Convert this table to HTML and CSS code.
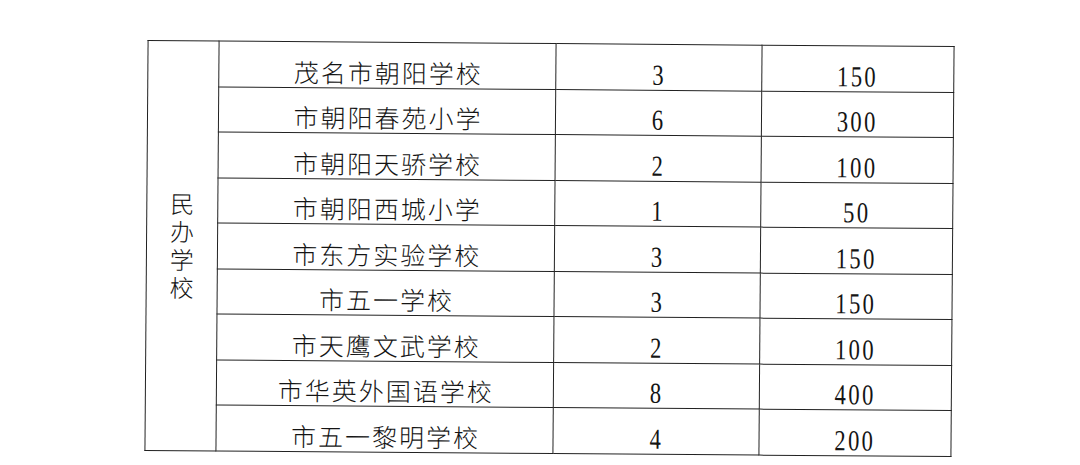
FILE: index.html
```html
<!DOCTYPE html>
<html lang="zh-CN">
<head>
<meta charset="utf-8">
<title>民办学校</title>
<link rel="stylesheet" href="styles.css">
</head>
<body>
<div class="page">
  <table class="sheet">
    <colgroup>
      <col class="c1"><col class="c2"><col class="c3"><col class="c4">
    </colgroup>
    <tbody>
      <tr>
        <td class="cat" rowspan="9"><span class="vert">民办学校</span></td>
        <td class="name">茂名市朝阳学校</td><td class="num"><span class="n">3</span></td><td class="num"><span class="n">150</span></td>
      </tr>
      <tr><td class="name">市朝阳春苑小学</td><td class="num"><span class="n">6</span></td><td class="num"><span class="n">300</span></td></tr>
      <tr><td class="name">市朝阳天骄学校</td><td class="num"><span class="n">2</span></td><td class="num"><span class="n">100</span></td></tr>
      <tr><td class="name">市朝阳西城小学</td><td class="num"><span class="n">1</span></td><td class="num"><span class="n">50</span></td></tr>
      <tr><td class="name">市东方实验学校</td><td class="num"><span class="n">3</span></td><td class="num"><span class="n">150</span></td></tr>
      <tr><td class="name">市五一学校</td><td class="num"><span class="n">3</span></td><td class="num"><span class="n">150</span></td></tr>
      <tr><td class="name">市天鹰文武学校</td><td class="num"><span class="n">2</span></td><td class="num"><span class="n">100</span></td></tr>
      <tr><td class="name">市华英外国语学校</td><td class="num"><span class="n">8</span></td><td class="num"><span class="n">400</span></td></tr>
      <tr><td class="name">市五一黎明学校</td><td class="num"><span class="n">4</span></td><td class="num"><span class="n">200</span></td></tr>
    </tbody>
  </table>
</div>
</body>
</html>
```

FILE: styles.css
```css
html, body {
  margin: 0;
  padding: 0;
  background: #ffffff;
}
body {
  width: 1080px;
  height: 465px;
  overflow: hidden;
  color: #141414;
}
.page {
  padding: 43px 0 0 146px;
}
.sheet {
  border-collapse: collapse;
  width: 806px;
  table-layout: fixed;
  transform: rotate(0.44deg);
}
.c1 { width: 71px; }
.c2 { width: 337px; }
.c3 { width: 206px; }
.c4 { width: 192px; }
.sheet td {
  border: 1.6px solid #222;
  padding: 0;
  height: 45.5px;
  box-sizing: border-box;
  text-align: center;
}
.name {
  font-family: "Noto Sans CJK SC", sans-serif;
  font-size: 25px;
  font-weight: 300;
  letter-spacing: 2px;
  line-height: 28px;
  vertical-align: bottom;
  padding-bottom: 2px !important;
  padding-left: 2px !important;
}
.num {
  vertical-align: bottom;
  padding-bottom: 0 !important;
}
.n {
  display: inline-block;
  font-family: "Liberation Serif", serif;
  font-size: 29px;
  line-height: 30px;
  letter-spacing: 3px;
  transform: scaleX(0.78);
}
.cat {
  vertical-align: middle;
}
.vert {
  display: inline-block;
  width: 26px;
  font-family: "Noto Sans CJK SC", sans-serif;
  font-size: 24px;
  font-weight: 300;
  line-height: 28px;
  word-break: break-all;
}
```
